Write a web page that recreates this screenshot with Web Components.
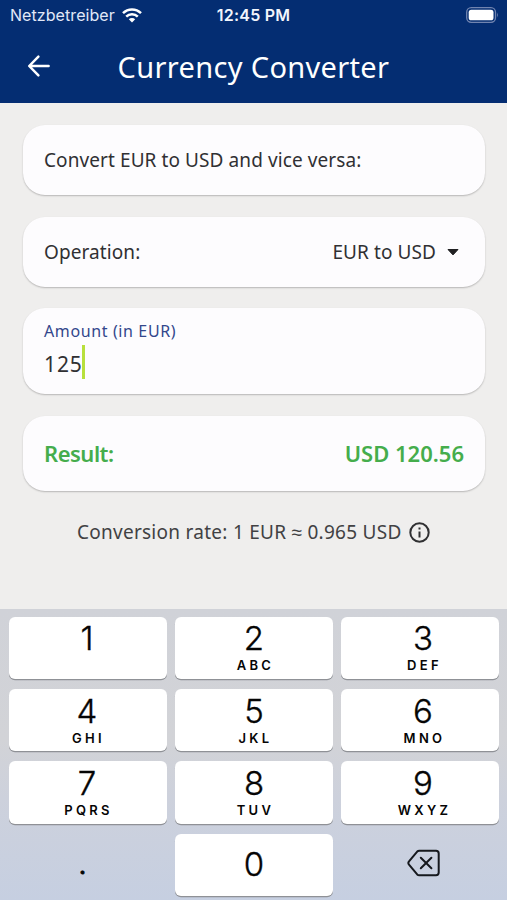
<!DOCTYPE html>
<html lang="en">
<head>
<meta charset="utf-8">
<title>Currency Converter</title>
<style>
html, body { margin: 0; height: 100%; }
body { width: 507px; height: 900px; overflow: hidden; background: #efeeed; font-family: "Noto Sans", sans-serif; color: #303033; }
</style>
</head>
<body>
<converter-app></converter-app>
<script>
function define(name, html, setup) {
  const template = document.createElement('template');
  template.innerHTML = html;
  customElements.define(name, class extends HTMLElement {
    constructor() {
      super();
      this.attachShadow({ mode: 'open' }).append(template.content.cloneNode(true));
    }
    connectedCallback() { if (setup) setup(this, this.shadowRoot); }
  });
}

define('status-bar', `
<style>
:host { display: grid; grid-template-columns: 1fr auto 1fr; align-items: center; height: 30px; padding: 0 8px 0 10px; font-family: Inter, sans-serif; font-size: 16px; line-height: 30px; color: #e1e8f8; }
.left { display: flex; align-items: center; gap: 7px; }
.carrier { letter-spacing: .07px; }
.time { font-weight: 600; font-size: 16px; color: #f2f5fc; letter-spacing: .2px; margin-right: 2px; }
.battery { justify-self: end; margin-top: -1px; }
svg { display: block; }
</style>
<div class="left"><span class="carrier">Netzbetreiber</span>
<svg width="20" height="15" viewBox="0 0 20 15" fill="none" stroke="#fff" stroke-width="2.5"><path d="M1 5.2a12.8 12.8 0 0 1 18 0M4.2 8.6a8.2 8.2 0 0 1 11.6 0"/><path d="M10 14.4 6.8 11.2a4.6 4.6 0 0 1 6.4 0Z" fill="#fff" stroke="none"/></svg></div>
<span class="time">12:45 PM</span>
<svg class="battery" width="33" height="16" viewBox="0 0 33 16"><rect x=".7" y=".7" width="28.8" height="14.6" rx="4.5" fill="none" stroke="#7184b0" stroke-width="1.3"/><rect x="2.7" y="2.7" width="24.8" height="10.6" rx="2.6" fill="#fff"/><path d="M31 5.5q1.8 2.5 0 5Z" fill="#7184b0"/></svg>`);

define('app-bar', `
<style>
:host { display: grid; grid-template-columns: 78px 1fr 78px; align-items: center; height: 73px; }
svg { display: block; margin: -2px 0 0 27px; }
h1 { margin: 0; text-align: center; font-weight: 400; font-size: 29px; line-height: 40px; color: #fff; letter-spacing: .33px; white-space: nowrap; }
</style>
<svg width="24" height="24" viewBox="0 0 24 24" fill="none" stroke="#fff" stroke-width="2.5" stroke-linecap="round" stroke-linejoin="round"><path d="M21.6 12H2.6M11.4 2.6 2.2 12l9.2 9.4"/></svg>
<h1><slot></slot></h1>`);

define('info-card', `
<style>
:host { box-sizing: border-box; display: flex; align-items: center; justify-content: space-between; padding: 0 21px; border-radius: 22px; background: #fdfcfe; box-shadow: 0 1px 1.5px rgba(0,0,0,.2), 0 1px 3px rgba(0,0,0,.04); font-size: 19px; letter-spacing: .09px; white-space: nowrap; }
</style><slot></slot>`);

define('drop-down', `
<style>
:host { display: flex; align-items: center; gap: 11px; margin-right: 5px; }
svg { display: block; }
</style><slot></slot><svg width="12" height="8" viewBox="0 0 12 8"><path d="M1 1.5H11L6 6.9Z" fill="#202022" stroke="#202022" stroke-linejoin="round"/></svg>`);

define('amount-field', `
<style>
:host { display: block; height: 86px; }
.label { padding-top: 11px; font-size: 16px; line-height: 24px; color: #33478c; letter-spacing: .62px; }
.value { display: flex; align-items: center; height: 34px; margin-top: 2px; font-size: 21px; letter-spacing: .9px; }
.value span { padding-top: 3px; }
i { width: 3px; height: 34px; margin-left: -1px; background: #b8e03c; }
</style>
<div class="label"><slot name="label"></slot></div>
<div class="value"><span><slot></slot></span><i></i></div>`);

define('rate-note', `
<style>
:host { display: flex; align-items: center; justify-content: center; gap: 7px; height: 28px; padding-right: 1.5px; font-size: 19px; letter-spacing: .27px; color: #414143; white-space: nowrap; }
svg { display: block; }
</style><span><slot></slot></span>
<svg width="21" height="21" viewBox="0 0 21 21"><circle cx="10.5" cy="10.5" r="9.2" fill="none" stroke="#303032" stroke-width="2"/><path d="M9.5 9.5h2v6h-2zM9.5 5.6h2v2h-2z" fill="#303032"/></svg>`);

define('key-cap', `
<style>
:host { box-sizing: border-box; display: flex; flex-direction: column; align-items: center; height: 62.5px; padding-top: 4px; border-radius: 6px; background: #fff; box-shadow: 0 1.3px .5px #8f9196; color: #050505; font-family: Inter, sans-serif; }
:host(:nth-of-type(n+4)) { padding-top: 5px; }
:host([plain]) { background: none; box-shadow: none; }
:host([solo]:nth-of-type(n)) { padding-top: 13px; }
:host(:nth-of-type(3n+1)) { padding-right: 2px; }
:host(:nth-of-type(3n)) { padding-left: 6px; }
.digit { font-size: 33px; font-weight: 300; line-height: 34px; -webkit-text-stroke: .35px #050505; }
.letters { margin-top: 3px; font-size: 13px; font-weight: 600; line-height: 14px; letter-spacing: 3.3px; padding-left: 3px; }
</style>
<div class="digit"><slot></slot></div><div class="letters"></div>`, (host, root) => {
  root.querySelector('.letters').textContent = host.getAttribute('letters') || '';
});

define('delete-icon', `
<style>:host { display: block; margin: 2px 0 0 2px; } svg { display: block; }</style>
<svg width="34" height="28" viewBox="0 0 34 28" fill="none" stroke="#15181d" stroke-width="2" stroke-linecap="round" stroke-linejoin="round"><path d="M12.2 1.8H29a2.7 2.7 0 0 1 2.7 2.7V23.5a2.7 2.7 0 0 1-2.7 2.7H12.2a3 3 0 0 1-2-.8L2 15.6a2.2 2.2 0 0 1 0-3.2L10.2 2.6a3 3 0 0 1 2-.8ZM13.8 8.8 24.4 19.2M24.4 8.8 13.8 19.2"/></svg>`);

define('key-pad', `
<style>
:host { box-sizing: border-box; display: grid; grid-template-columns: repeat(3, 158px); column-gap: 8px; row-gap: 9.9px; align-content: start; height: 291.5px; padding: 8px 8px 0 9px; background: linear-gradient(#d0d2d8 0, #d2d3d7 45%, #cdd1dc 65%, #c6cfe1 100%); }
.dot { display: block; font-size: 30px; line-height: 26px; margin: 3px 9px 0 0; -webkit-text-stroke: .9px #050505; }
</style>
<key-cap>1</key-cap><key-cap letters="ABC">2</key-cap><key-cap letters="DEF">3</key-cap>
<key-cap letters="GHI">4</key-cap><key-cap letters="JKL">5</key-cap><key-cap letters="MNO">6</key-cap>
<key-cap letters="PQRS">7</key-cap><key-cap letters="TUV">8</key-cap><key-cap letters="WXYZ">9</key-cap>
<key-cap plain solo><span class="dot">.</span></key-cap><key-cap solo>0</key-cap><key-cap plain solo><delete-icon></delete-icon></key-cap>`);

define('converter-app', `
<style>
:host { display: flex; flex-direction: column; height: 900px; }
header { background: #042d72; height: 103px; flex: none; }
main { flex: 1; display: flex; flex-direction: column; padding: 22px 22px 0 23px; }
.intro, .operation { height: 70px; margin-bottom: 22px; }
.operation { margin-bottom: 21px; }
.amount { height: 86px; margin-bottom: 22px; }
.result { height: 75px; margin-bottom: 27px; padding-bottom: 2px; color: #45ad4c; font-size: 22px; font-weight: 600; letter-spacing: 0; }
.result span:first-child { letter-spacing: -.5px; }
</style>
<header><status-bar></status-bar><app-bar>Currency Converter</app-bar></header>
<main>
<info-card class="intro"><span>Convert EUR to USD and vice versa:</span></info-card>
<info-card class="operation"><span>Operation:</span><drop-down>EUR to USD</drop-down></info-card>
<info-card class="amount"><amount-field><span slot="label">Amount (in EUR)</span>125</amount-field></info-card>
<info-card class="result"><span>Result:</span><span>USD 120.56</span></info-card>
<rate-note>Conversion rate: 1 EUR ≈ 0.965 USD</rate-note>
</main>
<key-pad></key-pad>`);
</script>
</body>
</html>
